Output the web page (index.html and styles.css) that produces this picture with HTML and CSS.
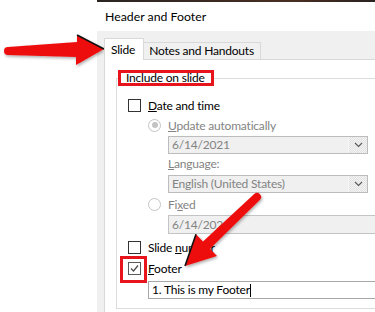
FILE: index.html
```html
<!DOCTYPE html>
<html>
<head>
<meta charset="utf-8">
<link rel="stylesheet" href="styles.css">
</head>
<body>
<div class="page">
  <div class="dialog">
    <div class="topstrip"></div>
    <div class="title">Header and Footer</div>
    <div class="tabarea">
      <div class="tabs">
        <div class="tab active">Slide</div>
        <div class="tab">Notes and Handouts</div>
      </div>
      <div class="panel">
        <div class="group">
          <div class="legend">Include on slide</div>
          <div class="row r-date"><span class="cb"></span><span><u>D</u>ate and time</span></div>
          <div class="sub">
            <div class="row r-upd"><span class="radio on"></span><span class="dis"><u>U</u>pdate automatically</span></div>
            <div class="combo c1"><span class="val">6/14/2021</span><span class="btn"><svg width="9" height="6" viewBox="0 0 9 6"><polyline points="1,1 4.5,4.5 8,1" fill="none" stroke="#5a5a5a" stroke-width="1.1"/></svg></span></div>
            <div class="label dis"><u>L</u>anguage:</div>
            <div class="combo"><span class="val">English (United States)</span><span class="btn"><svg width="9" height="6" viewBox="0 0 9 6"><polyline points="1,1 4.5,4.5 8,1" fill="none" stroke="#5a5a5a" stroke-width="1.1"/></svg></span></div>
            <div class="row r-fixed"><span class="radio"></span><span class="dis">Fi<u>x</u>ed</span></div>
            <div class="textbox">6/14/2021</div>
          </div>
          <div class="row r-slide"><span class="cb"></span><span>Slide <u>n</u>umber</span></div>
          <div class="row r-footer"><span class="cb checked"><svg width="11" height="11" viewBox="0 0 11 11"><polyline points="2,5.5 4.5,8 9,2.5" fill="none" stroke="#4a4a4a" stroke-width="1.2"/></svg><span class="hl"></span></span><span><u>F</u>ooter</span></div>
          <div class="footerbox">1. This is my Footer<span class="caret"></span></div>
        </div>
      </div>
    </div>
  </div>
  <svg class="arrows" width="375" height="312" viewBox="0 0 375 312">
    <defs>
      <filter id="sh" x="-20%" y="-20%" width="140%" height="140%">
        <feDropShadow dx="1" dy="1.5" stdDeviation="1.6" flood-color="#000" flood-opacity="0.35"/>
      </filter>
    </defs>
    <g filter="url(#sh)">
      <path d="M8,47 L77,42 L77,35 L104,49 L76,65 L76,57 L8,55 A4,4 0 0 1 8,47 Z" fill="#ee1010"/>
      <path d="M203,241.5 L196,234.3 L185,266 L217,256 L210,248.7 L259.8,199.9 A4,4 0 0 0 254.2,194.1 Z" fill="#ee1010"/>
    </g>
    <line x1="77" y1="35" x2="104" y2="49" stroke="#111" stroke-width="1.6"/>
    <line x1="196" y1="234.3" x2="185" y2="266" stroke="#111" stroke-width="1.6"/>
  </svg>
</div>
</body>
</html>
```
FILE: styles.css
```css
* { box-sizing: border-box; }
html, body { margin: 0; padding: 0; }
body {
  width: 375px;
  height: 312px;
  overflow: hidden;
  background: #fff;
  font-family: Lato, "Noto Sans", sans-serif;
  font-size: 12px;
  letter-spacing: -0.2px;
  color: #000;
}
.page {
  position: relative;
  width: 375px;
  height: 312px;
  overflow: hidden;
}
.dialog {
  margin-left: 97px;
  width: 278px;
  height: 312px;
  overflow: hidden;
  background: #fff;
}
.topstrip {
  height: 2px;
  background: linear-gradient(90deg, #2b2522, #3a2a22 40%, #4a2e22 70%, #2a2220);
}
.title {
  height: 29px;
  line-height: 29px;
  padding-left: 8px;
  font-size: 12.3px;
  letter-spacing: 0;
}
.tabarea {
  background: #f0f0f0;
  padding-left: 7px;
  height: 300px;
}
.tabs {
  display: flex;
  align-items: flex-end;
  padding-top: 7px;
}
.tab {
  height: 17px;
  line-height: 15px;
  padding: 0 6px 0 5px;
  border: 1px solid #d9d9d9;
  border-left: none;
  border-bottom: none;
  background: #f0f0f0;
}
.tab.active {
  position: relative;
  z-index: 1;
  height: 22px;
  line-height: 22px;
  margin-bottom: -1px;
  padding: 0 8px 0 6px;
  border-left: 1px solid #d9d9d9;
  background: #fff;
}
.panel {
  background: #fff;
  border-left: 1px solid #d9d9d9;
  border-top: 1px solid #d9d9d9;
  height: 260px;
  padding-left: 11px;
  padding-top: 18px;
}
.group {
  width: 300px;
  border: 1px solid #dcdcdc;
  padding-bottom: 9px;
  display: flex;
  flex-direction: column;
  align-items: flex-start;
}
.legend {
  margin: -9px 0 0 1px;
  border: 3px solid #e8141b;
  background: #fff;
  height: 16px;
  line-height: 10px;
  padding: 0 6px 0 5px;
}
.row {
  display: flex;
  align-items: center;
  gap: 7px;
  height: 18px;
  padding-left: 11px;
}
.r-date { margin-top: 10px; }
.sub {
  display: flex;
  flex-direction: column;
  align-items: flex-start;
  padding-left: 31px;
}
.sub .row { padding-left: 0; }
.r-upd { margin-top: 2px; }
.r-fixed { margin-top: 2px; }
.r-slide { margin-top: 4px; height: 19px; }
.r-footer { margin-top: 2px; height: 19px; }
.dis { color: #838383; }
.cb {
  position: relative;
  width: 13px;
  height: 13px;
  border: 1px solid #333;
  background: #fff;
  flex: none;
}
.cb.checked { border-color: #5a5a5a; }
.cb svg { position: absolute; left: 0; top: 0; }
.hl {
  position: absolute;
  left: -9px;
  top: -7px;
  width: 27px;
  height: 27px;
  border: 3px solid #e8141b;
}
.radio {
  position: relative;
  width: 13px;
  height: 13px;
  border-radius: 50%;
  border: 1px solid #c4c4c4;
  background: #fff;
  flex: none;
}
.radio.on::after {
  content: "";
  position: absolute;
  left: 2.5px;
  top: 2.5px;
  width: 6px;
  height: 6px;
  border-radius: 50%;
  background: #c4c4c4;
}
.combo, .textbox, .label { margin-left: 20px; }
.combo {
  margin-top: 2px;
  width: 200px;
  height: 18px;
  display: flex;
  border: 1px solid #bcbcbc;
  background: #f0f0f0;
  color: #838383;
}
.combo .val {
  flex: 1;
  line-height: 16px;
  padding-left: 3px;
}
.combo .btn {
  width: 19px;
  display: flex;
  align-items: center;
  justify-content: center;
  border-left: 1px solid #f6f6f6;
  background: repeating-conic-gradient(#e2e2e2 0 25%, #f3f3f3 0 50%) 0 0 / 2px 2px;
}
.label {
  height: 19px;
  line-height: 19px;
}
.textbox {
  margin-top: 2px;
  width: 220px;
  height: 19px;
  line-height: 17px;
  padding-left: 3px;
  border: 1px solid #c4c4c4;
  background: #f0f0f0;
  color: #838383;
}
.footerbox {
  margin: 3px 0 0 31px;
  width: 240px;
  height: 18px;
  line-height: 16px;
  padding-left: 3px;
  border: 1px solid #a8a8a8;
  background: #fff;
  display: flex;
  align-items: center;
}
.caret {
  display: inline-block;
  width: 1px;
  height: 13px;
  background: #000;
}
.arrows {
  position: absolute;
  left: 0;
  top: 0;
  pointer-events: none;
}
```
